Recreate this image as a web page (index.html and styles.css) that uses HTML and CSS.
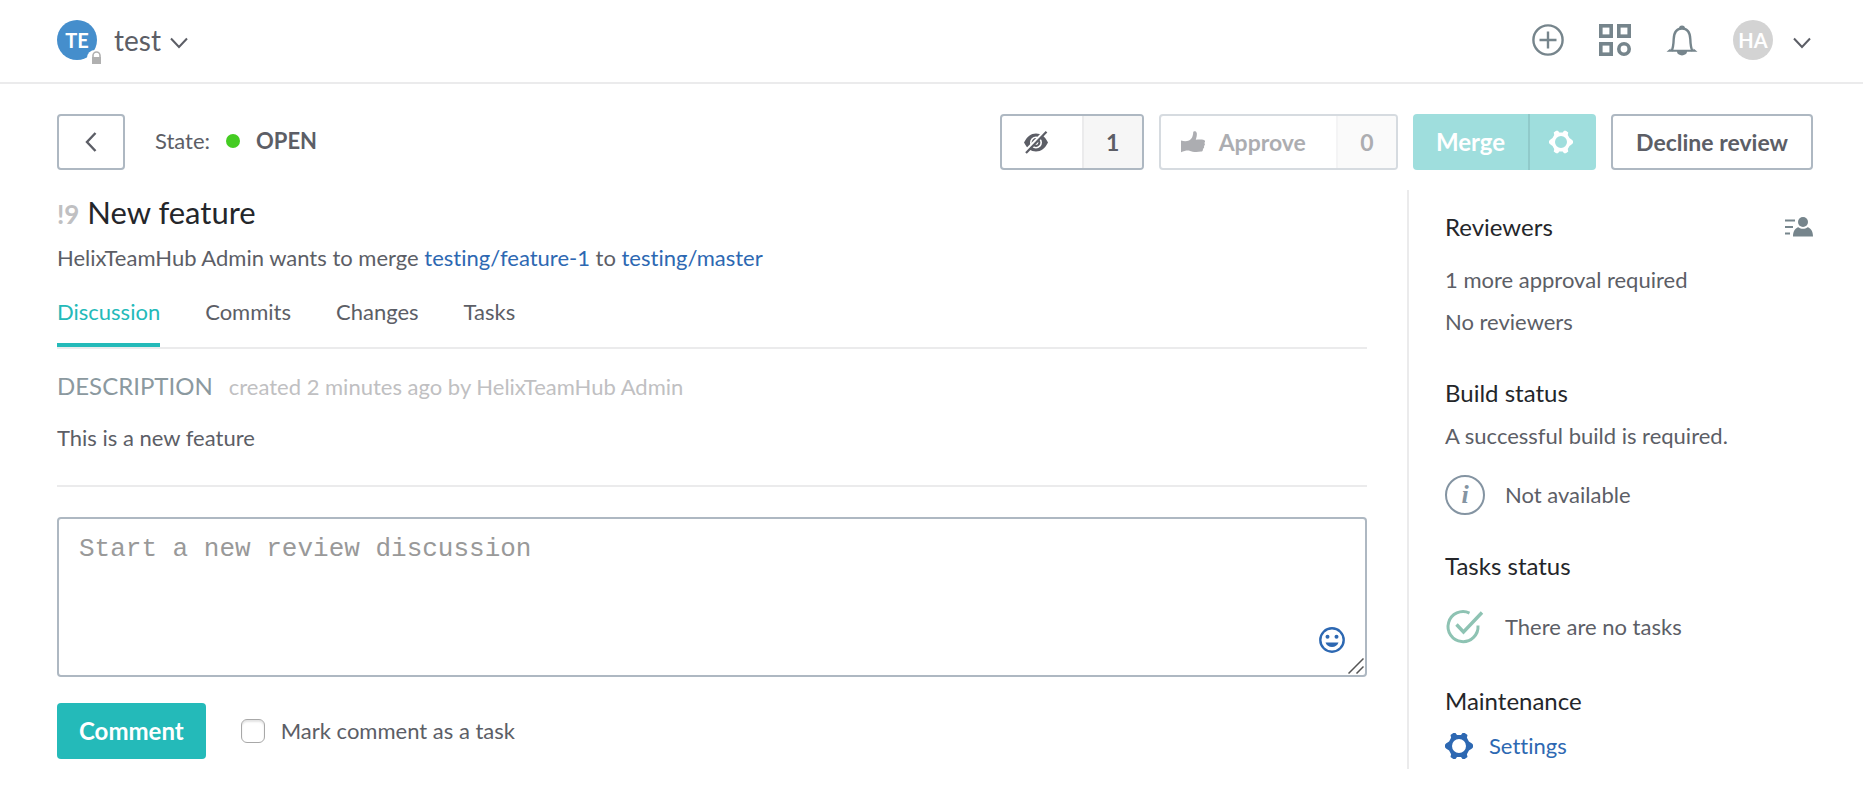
FILE: index.html
```html
<!DOCTYPE html>
<html lang="en">
<head>
    <meta charset="UTF-8">
    <meta name="viewport" content="width=device-width, initial-scale=1.0">
    <title>New feature</title>
    <link rel="stylesheet" href="styles.css">
</head>
<body>
    <!-- shared icons -->
    <svg class="sprite" aria-hidden="true">
        <symbol id="chevron" viewBox="0 0 18 12">
            <path d="M1 1.5l8 8.5 8-8.5" fill="none" stroke="currentColor" stroke-width="2"/>
        </symbol>
        <symbol id="gear" viewBox="0 0 28 28">
            <path fill="currentColor" fill-rule="evenodd" d="M8.3 1h2.2l1.5 2h4l1.5-2h2.2l2.8 1.9-.6 2.9 2 3.6 3.1 2.2 1 1.2v2.4l-1 1.2-3.1 2.2-2 3.6.6 2.9-2.8 1.9h-2.2l-1.5-2h-4l-1.5 2H8.3l-2.8-1.9.6-2.9-2-3.6L1 16.4l-1-1.2v-2.4l1-1.2 3.1-2.2 2-3.6-.6-2.9zM14 7a7 7 0 1 0 0 14 7 7 0 0 0 0-14z"/>
        </symbol>
    </svg>

    <header class="header">
        <button class="project">
            <span class="avatar">TE
                <svg class="lock" viewBox="0 0 13 16">
                    <circle cx="5" cy="7" r="8" fill="#fff"/>
                    <path d="M3 7V4.5a3.5 3.5 0 0 1 7 0V7" fill="none" stroke="#b0b0b0" stroke-width="1.6"/>
                    <rect x="2" y="6" width="9" height="7" fill="#b0b0b0"/>
                </svg>
            </span>
            <span class="project-name">test</span>
            <svg class="chevron"><use href="#chevron"/></svg>
        </button>
        <nav class="header-nav">
            <button class="icon-btn" aria-label="Create">
                <svg width="32" height="32" viewBox="0 0 32 32" fill="none" stroke="currentColor" stroke-width="2.4">
                    <circle cx="16" cy="16" r="14.6"/>
                    <path d="M16 7.5v17M7.5 16h17"/>
                </svg>
            </button>
            <button class="icon-btn" aria-label="Apps">
                <svg width="32" height="32" viewBox="0 0 32 32" fill="none" stroke="currentColor" stroke-width="3.6">
                    <rect x="1.8" y="1.8" width="10.4" height="10.4"/>
                    <rect x="19.8" y="1.8" width="10.4" height="10.4"/>
                    <rect x="1.8" y="19.8" width="10.4" height="10.4"/>
                    <circle cx="25" cy="25" r="5.2"/>
                </svg>
            </button>
            <button class="icon-btn" aria-label="Notifications">
                <svg width="32" height="32" viewBox="0 0 32 32">
                    <path d="M5.5 27c1.8-3 2-6 2.2-12 .3-6 3-10.5 8.3-10.5s8 4.5 8.3 10.5c.2 6 .4 9 2.2 12" fill="none" stroke="currentColor" stroke-width="2.4"/>
                    <path d="M.5 27.8l4-3.3v1.3h23v-1.3l4 3.3H21a5 3.6 0 0 1-10 0zM13 4.5a3 3 0 0 1 6 0z" fill="currentColor"/>
                </svg>
            </button>
            <button class="user" aria-label="User menu">
                <span class="avatar avatar-user">HA</span>
                <svg class="chevron"><use href="#chevron"/></svg>
            </button>
        </nav>
    </header>

    <div class="toolbar">
        <button class="btn btn-back" aria-label="Back">
            <svg width="12" height="20" viewBox="0 0 12 20"><path d="M10.5 1L2 10l8.5 9" fill="none" stroke="currentColor" stroke-width="2.4"/></svg>
        </button>
        <div class="state">State: <span class="dot"></span> <strong>OPEN</strong></div>
        <div class="actions">
            <button class="btn btn-split" aria-label="Unwatch">
                <span class="btn-main">
                    <svg width="24" height="24" viewBox="0 0 24 24">
                        <path fill="currentColor" fill-rule="evenodd" d="M0 12.5C3 6.5 7 3.5 12 3.5s9 3 12 9c-3 6-7 9-12 9s-9-3-12-9zM12 6.5a6 6 0 1 0 0 12 6 6 0 0 0 0-12z"/>
                        <circle cx="12" cy="12.5" r="3.4" fill="none" stroke="currentColor" stroke-width="2"/>
                        <path d="M.8 21.5L21 .8" stroke="#fff" stroke-width="2.5"/>
                        <path d="M2 23L22.5 1.8" stroke="currentColor" stroke-width="2.2"/>
                    </svg>
                </span>
                <span class="btn-count">1</span>
            </button>
            <button class="btn btn-split" disabled>
                <span class="btn-main">
                    <svg width="24" height="22" viewBox="0 0 24 22">
                        <path fill="currentColor" d="M0 9.5c3 .9 5.5.9 8 0 2.500-1.300 4-3.600 4.200-8.300.3-1.500 3.300-1.600 3.600 1 .2 2.600-.3 4.500-1 6.500 3-.4 6-.4 8.200.2 1.300.5 1.300 2.200.4 3 .8 1 .7 2.500-.5 3 .5 1.200.2 2.400-1 2.900.3 1.300-.4 2.500-1.800 2.800-4.500.7-8.600.5-11.600-.9-2.500-.4-5.500.3-8.500 1.500z"/>
                    </svg>
                    Approve
                </span>
                <span class="btn-count">0</span>
            </button>
            <div class="merge">
                <button class="merge-btn">Merge</button>
                <button class="merge-btn merge-options" aria-label="Merge options">
                    <svg width="24" height="24"><use href="#gear"/></svg>
                </button>
            </div>
            <button class="btn btn-decline">Decline review</button>
        </div>
    </div>

    <div class="page">
        <main class="main">
            <h1 class="title"><span class="number">!9</span> New feature</h1>
            <p class="summary">HelixTeamHub Admin wants to merge <a href="#">testing/feature-1</a> to <a href="#">testing/master</a></p>

            <nav class="tabs">
                <a class="tab active" href="#">Discussion</a>
                <a class="tab" href="#">Commits</a>
                <a class="tab" href="#">Changes</a>
                <a class="tab" href="#">Tasks</a>
            </nav>

            <section class="description">
                <div class="description-head">
                    <h2>DESCRIPTION</h2>
                    <span>created 2 minutes ago by HelixTeamHub Admin</span>
                </div>
                <p>This is a new feature</p>
            </section>

            <form class="comment-form">
                <div class="editor">
                    <textarea placeholder="Start a new review discussion" aria-label="Comment"></textarea>
                    <button type="button" class="emoji" aria-label="Insert emoji">
                        <svg width="26" height="26" viewBox="0 0 26 26">
                            <circle cx="13" cy="13" r="11.7" fill="none" stroke="currentColor" stroke-width="2.4"/>
                            <circle cx="8.5" cy="9.7" r="2" fill="currentColor"/>
                            <circle cx="17.5" cy="9.7" r="2" fill="currentColor"/>
                            <path d="M6.5 15.5h13c-1 2.9-3.4 4.5-6.5 4.5s-5.5-1.6-6.5-4.5z" fill="currentColor"/>
                        </svg>
                    </button>
                    <svg class="grip" viewBox="0 0 16 16"><path d="M.5 15.5l15-15M8.5 15.5l7-7" stroke="#555" stroke-width="1.5"/></svg>
                </div>
                <div class="form-row">
                    <button type="button" class="btn-primary">Comment</button>
                    <input type="checkbox" id="task">
                    <label for="task">Mark comment as a task</label>
                </div>
            </form>
        </main>

        <aside class="sidebar">
            <section class="reviewers">
                <div class="sidebar-head">
                    <h3>Reviewers</h3>
                    <button class="icon-btn" aria-label="Edit reviewers">
                        <svg width="28" height="20" viewBox="0 0 28 20" fill="currentColor">
                            <path d="M0 2.5h10v2H0zM0 9h8v2H0zM0 15.5h5v2H0z"/>
                            <circle cx="18" cy="5" r="5"/>
                            <path d="M8 19.5c0-5.5 2.5-8.7 5.5-9.3 2.6 2 6.4 2 9 0 3 .6 5.5 3.8 5.5 9.3z"/>
                        </svg>
                    </button>
                </div>
                <p>1 more approval required</p>
                <p>No reviewers</p>
            </section>
            <section class="build">
                <h3>Build status</h3>
                <p>A successful build is required.</p>
                <div class="status"><span class="info">i</span> Not available</div>
            </section>
            <section class="tasks">
                <h3>Tasks status</h3>
                <div class="status">
                    <svg width="40" height="40" viewBox="0 0 40 40" fill="none" stroke="#8ec3b3" stroke-width="3">
                        <path d="M24.5 6.1A15 15 0 1 0 33 18.5"/>
                        <path d="M11.5 17.5l7 7.5L37 5.5" stroke-width="3.4"/>
                    </svg>
                    There are no tasks
                </div>
            </section>
            <section class="maintenance">
                <h3>Maintenance</h3>
                <a class="settings" href="#"><svg width="28" height="28"><use href="#gear"/></svg> Settings</a>
            </section>
        </aside>
    </div>
</body>
</html>
```

FILE: styles.css
```css
:root {
    --text: #5c5e66;
    --heading: #24262a;
    --link: #2d68b2;
    --teal: #24bab9;
    --border: #aeb8c2;
    --line: #ebebec;
    --icon: #76858c;
}

* {
    box-sizing: border-box;
}
body {
    margin: 0;
    background: #fff;
    color: var(--text);
    font-family: Lato, "Liberation Sans", sans-serif;
    font-size: 22px;
    font-variant-ligatures: none;
    line-height: 30px;
}
h1, h2, h3, p {
    margin: 0;
    font-weight: 400;
}
h3 {
    color: var(--heading);
    font-size: 24px;
}
a {
    color: var(--link);
    text-decoration: none;
}
button {
    padding: 0;
    border: none;
    background: none;
    color: inherit;
    font: inherit;
    cursor: pointer;
}
svg {
    display: block;
    flex: none;
}
.sprite {
    position: absolute;
    width: 0;
    height: 0;
}

/* header */
.header {
    display: flex;
    align-items: center;
    justify-content: space-between;
    height: 84px;
    padding: 0 52px 2px 57px;
    border-bottom: 2px solid var(--line);
}
.project, .user {
    display: flex;
    align-items: center;
}
.avatar {
    position: relative;
    width: 40px;
    height: 40px;
    border-radius: 50%;
    background: #458ecc;
    color: #fff;
    font-size: 20px;
    font-weight: 700;
    line-height: 40px;
    text-align: center;
}
.avatar-user {
    background: #d3d3d3;
}
.lock {
    position: absolute;
    right: -6px;
    bottom: -7px;
    width: 13px;
    height: 16px;
    overflow: visible;
}
.project-name {
    margin: 0 9px 0 17px;
    font-size: 28px;
}
.chevron {
    width: 18px;
    height: 12px;
    margin-top: 5px;
}
.header-nav {
    display: flex;
    align-items: center;
    gap: 35px;
}
.user {
    gap: 20px;
}
.icon-btn {
    color: var(--icon);
}

/* toolbar */
.toolbar {
    display: flex;
    align-items: center;
    margin-top: 30px;
    padding: 0 50px 0 57px;
}
.btn {
    display: flex;
    align-items: center;
    justify-content: center;
    height: 56px;
    border: 2px solid var(--border);
    border-radius: 4px;
    background: #fff;
    font-size: 23px;
    font-weight: 700;
}
.btn-back {
    width: 68px;
}
.state {
    display: flex;
    align-items: center;
    margin-left: 30px;
    padding-bottom: 3px;
}
.dot {
    width: 14px;
    height: 14px;
    margin: 0 16px;
    border-radius: 50%;
    background: #44cc22;
}
.actions {
    display: flex;
    gap: 15px;
    margin-left: auto;
}
.btn-split {
    align-items: stretch;
}
.btn-split:disabled {
    opacity: 0.5;
}
.btn-main {
    display: flex;
    align-items: center;
    gap: 14px;
    padding: 0 30px 0 20px;
}
.btn-split:first-child .btn-main {
    padding: 0 34px 0 22px;
}
.btn-count {
    display: flex;
    align-items: center;
    justify-content: center;
    width: 60px;
    border-left: 2px solid var(--line);
    border-radius: 0 2px 2px 0;
    background: #f6f6f6;
}
.merge {
    display: flex;
    overflow: hidden;
    border-radius: 4px;
    background: #9fdedd;
}
.merge-btn {
    padding: 0 23px;
    color: #fff;
    font-size: 24px;
    font-weight: 700;
}
.merge-options {
    padding: 0 23px 0 19px;
    border-left: 2px solid #90caca;
}
.btn-decline {
    padding: 0 23px;
}

/* page */
.page {
    display: flex;
    gap: 40px;
    margin-top: 20px;
    padding: 0 50px 36px 57px;
}
.main {
    flex: 1;
}
.title {
    color: var(--heading);
    font-size: 31px;
    line-height: 44px;
}
.number {
    color: #c0c0c2;
    font-size: 26px;
    font-weight: 700;
    line-height: 30px;
}
.summary {
    margin-top: 9px;
}
.tabs {
    display: flex;
    gap: 45px;
    margin-top: 24px;
    border-bottom: 2px solid var(--line);
}
.tab {
    padding-bottom: 16px;
    border-bottom: 4px solid transparent;
    color: var(--text);
}
.tab.active {
    border-color: var(--teal);
    color: var(--teal);
}
.description {
    padding: 22px 0 32px;
    border-bottom: 2px solid var(--line);
}
.description-head {
    display: flex;
    align-items: baseline;
    gap: 16px;
    margin-bottom: 21px;
    color: #c0c0c2;
}
.description h2 {
    color: #8b999f;
    font-size: 24px;
}
.comment-form {
    margin-top: 30px;
}
.editor {
    position: relative;
}
.editor textarea {
    display: block;
    width: 100%;
    height: 160px;
    padding: 15px 20px;
    border: 2px solid var(--border);
    border-radius: 4px;
    font-family: "Liberation Mono", monospace;
    font-size: 26px;
    line-height: 30px;
    resize: none;
}
.editor textarea::placeholder {
    color: #999;
}
.emoji {
    position: absolute;
    right: 22px;
    bottom: 24px;
    color: var(--link);
}
.grip {
    position: absolute;
    right: 3px;
    bottom: 3px;
    width: 16px;
    height: 16px;
}
.form-row {
    display: flex;
    align-items: center;
    margin-top: 26px;
}
.btn-primary {
    height: 56px;
    padding: 0 22px;
    border-radius: 4px;
    background: var(--teal);
    color: #fff;
    font-size: 24px;
    font-weight: 700;
}
.form-row input {
    appearance: none;
    width: 24px;
    height: 24px;
    margin: 0 16px 0 35px;
    border: 1px solid #a8a8a8;
    border-radius: 6px;
    box-shadow: inset 0 2px 2px #e4e4e4;
}
.form-row input:checked {
    background: var(--teal);
}

/* sidebar */
.sidebar {
    width: 406px;
    padding: 22px 0 8px 36px;
    border-left: 2px solid var(--line);
}
.sidebar-head {
    display: flex;
    align-items: center;
    justify-content: space-between;
    margin-bottom: 23px;
}
.reviewers p + p {
    margin-top: 12px;
}
.build {
    margin-top: 41px;
}
.build p {
    margin: 13px 0 24px;
}
.tasks {
    margin-top: 36px;
}
.tasks h3 {
    margin-bottom: 26px;
}
.maintenance {
    margin-top: 39px;
}
.status {
    display: flex;
    align-items: center;
    gap: 20px;
}
.info {
    width: 40px;
    height: 40px;
    border: 2px solid #8494a2;
    border-radius: 50%;
    color: #8494a2;
    font-family: "Liberation Serif", serif;
    font-size: 26px;
    font-style: italic;
    font-weight: 700;
    line-height: 36px;
    text-align: center;
}
.settings {
    display: flex;
    align-items: center;
    gap: 16px;
    margin-top: 15px;
}
```
